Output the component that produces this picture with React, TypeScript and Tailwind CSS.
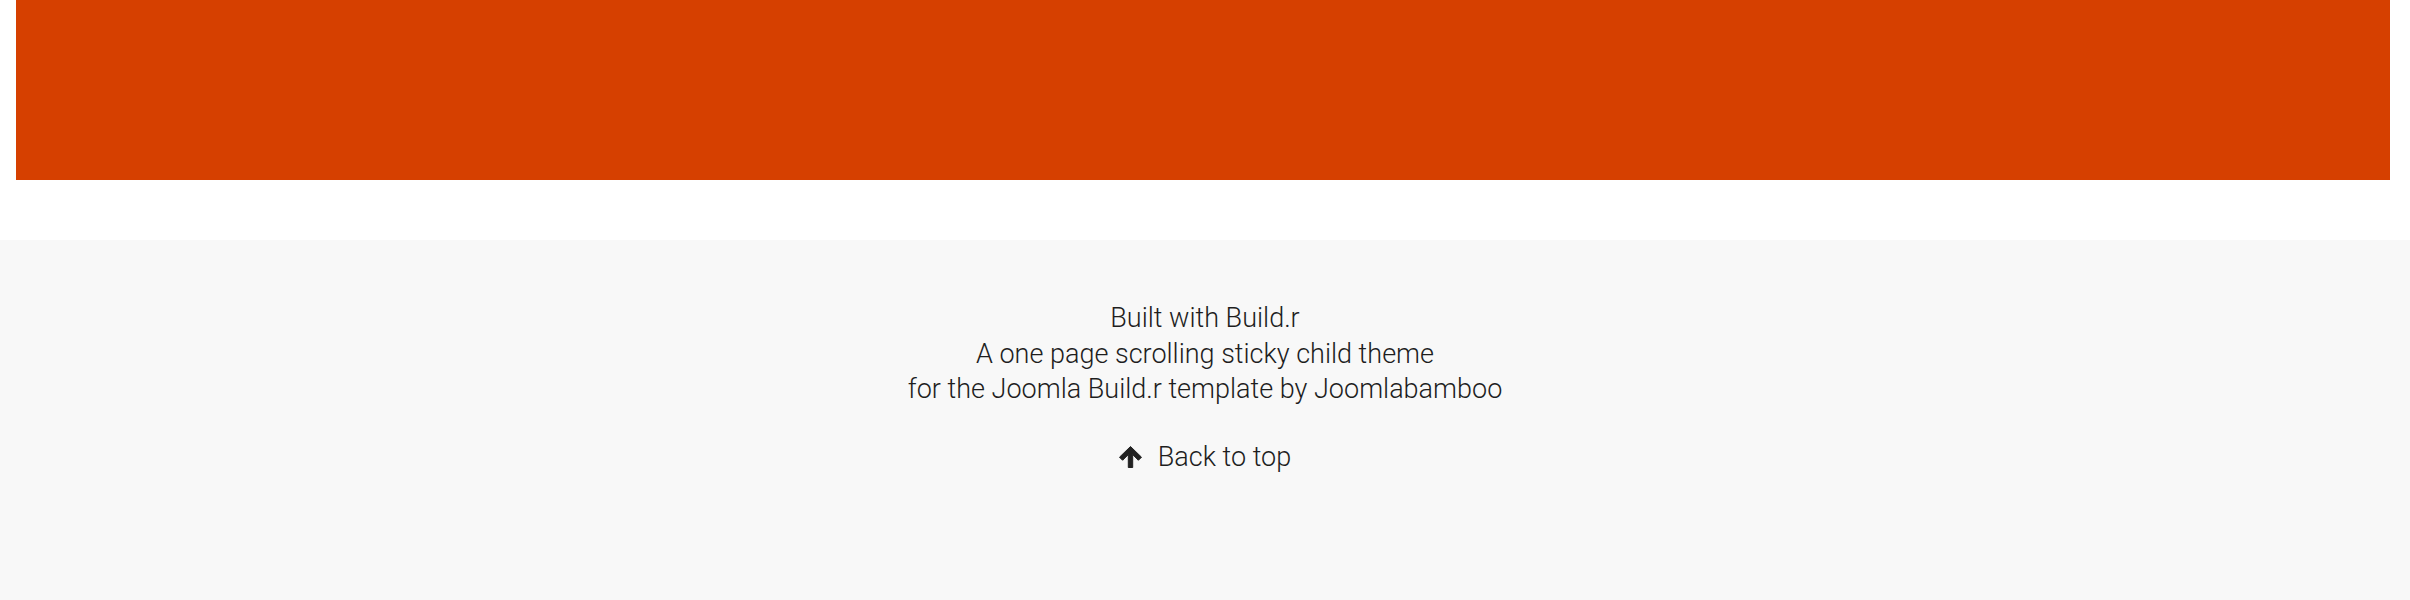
import React from 'react';

// 返回顶部箭头
const ArrowUp: React.FC = () => (
  <svg width="23" height="22" viewBox="0 0 23 22" className="shrink-0">
    <path
      d="M11.5 0.5 L22.5 11.2 L19.4 14.3 L13.7 8.6 L13.7 21.5 L9.3 21.5 L9.3 8.6 L3.6 14.3 L0.5 11.2 Z"
      fill="#222222"
      stroke="#222222"
      strokeWidth="1"
      strokeLinejoin="round"
    />
  </svg>
);

const App: React.FC = () => {
  return (
    <div className="w-[2410px] h-[600px] bg-white overflow-hidden" style={{ fontFamily: 'Roboto, "Liberation Sans", sans-serif' }}>
      {/* 橙色区块 */}
      <div className="pl-[16px] pr-[20px]">
        <div className="h-[180px] bg-[#d64000]" />
      </div>

      {/* 页脚 */}
      <footer className="mt-[60px] h-[360px] bg-[#f8f8f8] pt-[61px] text-center text-[#1e1e1e] font-light">
        <div className="text-[27px] leading-[35.5px]">
          <p>Built with Build.r</p>
          <p>A one page scrolling sticky child theme</p>
          <p>for the Joomla Build.r template by Joomlabamboo</p>
        </div>
        <a href="#top" className="mt-[31px] inline-flex items-center gap-[16px] text-[27px] leading-[36px] text-[#1e1e1e]">
          <ArrowUp />
          <span>Back to top</span>
        </a>
      </footer>
    </div>
  );
};

export default App;
